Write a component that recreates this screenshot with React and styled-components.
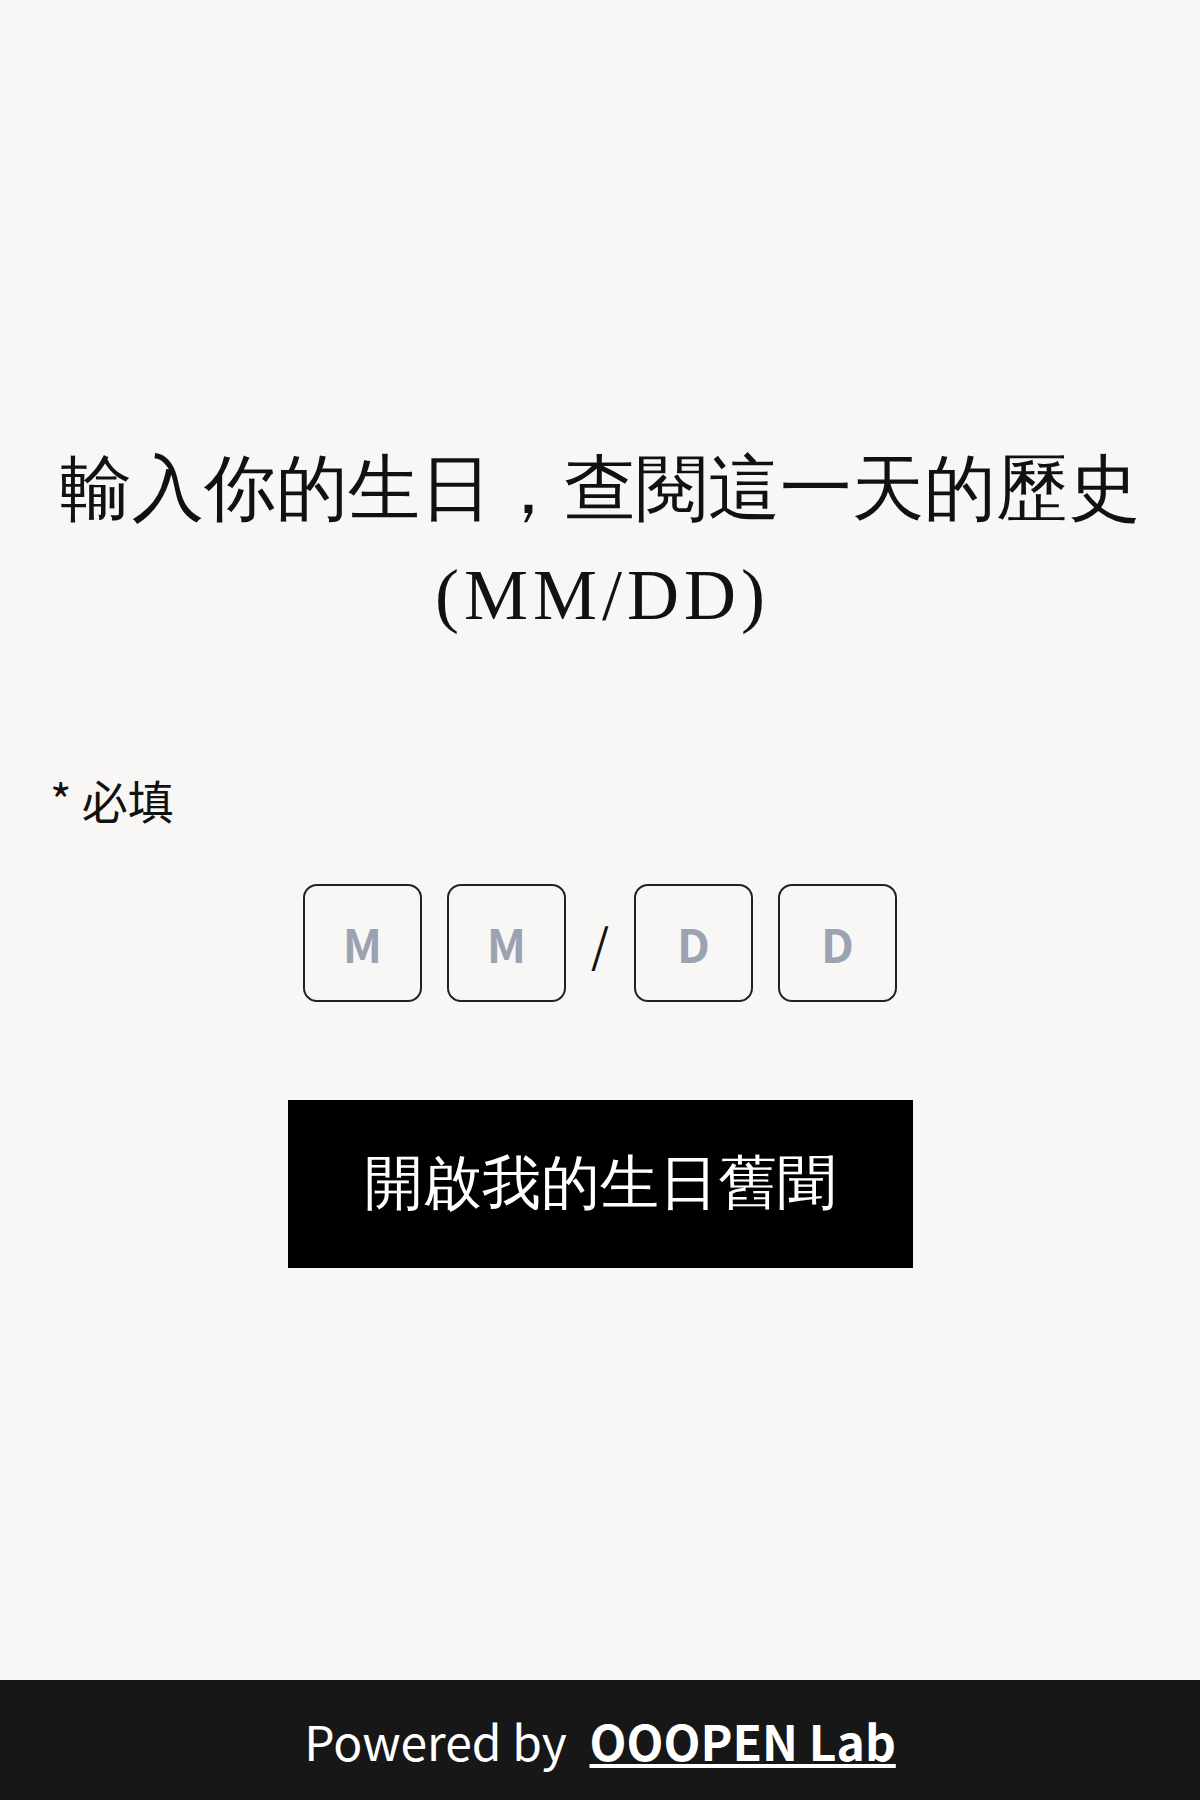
import styled, { createGlobalStyle } from 'styled-components';

const GlobalStyle = createGlobalStyle`
    body{
        margin: 0;
        background-color: #f8f7f5;
        font-family: "Noto Sans CJK TC", "Noto Sans", sans-serif;
    }
`

export default function App() {
    const slots = ['M', 'M', '/', 'D', 'D']

    return (
        <Page>
            <GlobalStyle />
            <Main>
                <Title>輸入你的生日，查閱這一天的歷史<br /><Format>(MM/DD)</Format></Title>
                <Required>* 必填</Required>
                <DateRow>
                    {slots.map((s, i) => s === '/'
                        ? <Slash key={i}>/</Slash>
                        : <DigitBox key={i} placeholder={s} maxLength={1} />
                    )}
                </DateRow>
                <Button>開啟我的生日舊聞</Button>
            </Main>
            <Footer>
                Powered by <a href="#">OOOPEN Lab</a>
            </Footer>
        </Page>
    )
}

const Page = styled.div`
    min-height: 1800px;
    display: flex;
    flex-direction: column;
`

const Main = styled.main`
    flex: 1;
    display: flex;
    flex-direction: column;
    padding-top: 436px;
`

const Title = styled.h1`
    margin: 0;
    text-align: center;
    font-family: "Liberation Serif", serif;
    font-weight: 400;
    font-size: 72px;
    line-height: 106px;
    color: #111;
`

const Format = styled.span`
    letter-spacing: 5px;
    padding-left: 5px;
`

const Required = styled.p`
    margin: 123px 0 0 50px;
    font-size: 46px;
    line-height: 56px;
    color: #111;
`

const DateRow = styled.div`
    display: flex;
    justify-content: center;
    align-items: center;
    gap: 25px;
    margin-top: 57px;
`

const DigitBox = styled.input`
    box-sizing: border-box;
    width: 119px;
    height: 118px;
    border: 2px solid #222;
    border-radius: 14px;
    background: transparent;
    text-align: center;
    font-family: "Noto Sans CJK TC", sans-serif;
    font-weight: 700;
    font-size: 46px;
    color: #111;
    outline: none;
    &::placeholder{
        color: #9ba3b2;
    }
`

const Slash = styled.span`
    font-size: 46px;
    color: #111;
`

const Button = styled.button`
    align-self: center;
    width: 625px;
    height: 168px;
    margin-top: 98px;
    border: none;
    background-color: #000;
    color: #fff;
    font-family: "Liberation Serif", serif;
    font-size: 59px;
    cursor: pointer;
`

const Footer = styled.footer`
    height: 120px;
    background-color: #171717;
    color: #fff;
    display: flex;
    align-items: center;
    justify-content: center;
    font-size: 48px;
    white-space: pre;
    a{
        color: #fff;
        font-weight: 700;
        margin-left: 12px;
    }
`
